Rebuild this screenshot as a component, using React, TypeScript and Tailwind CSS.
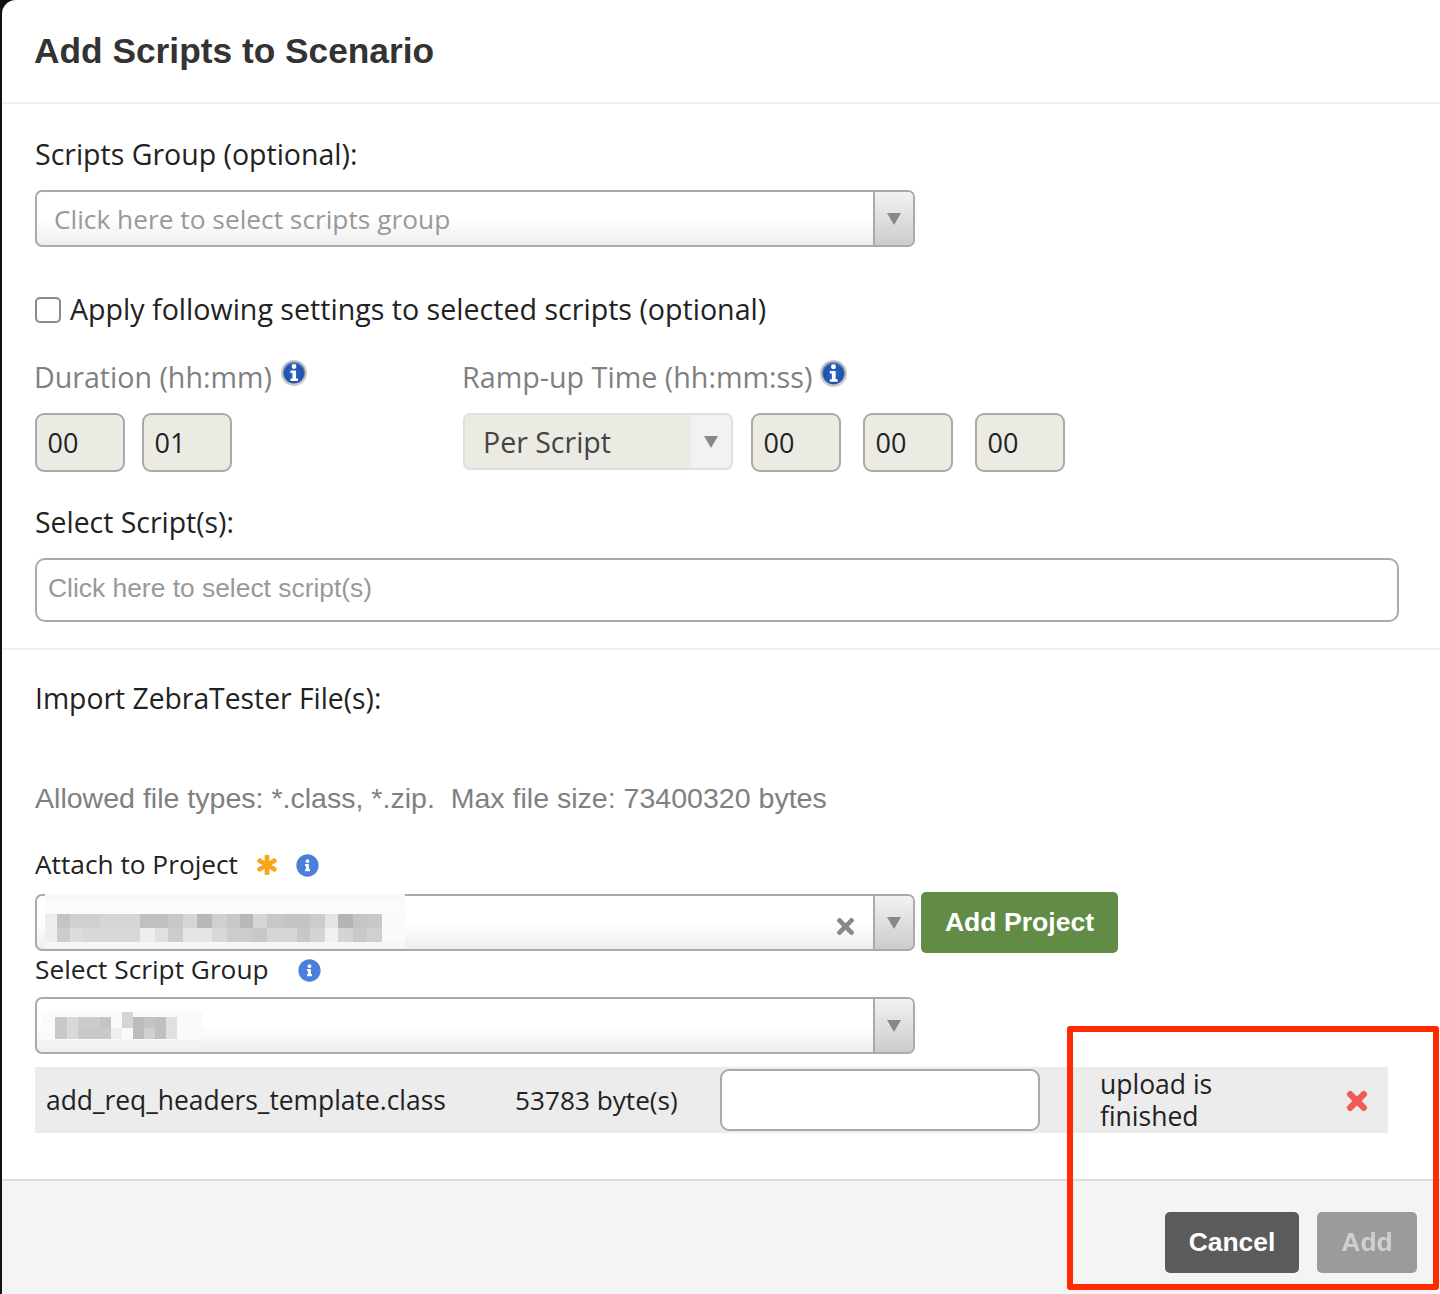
import React from "react";
import { FaAsterisk, FaInfoCircle, FaTimes } from "react-icons/fa";

type Part = [number, number, number, number, string];

const row = (y: number, h: number, stops: [number, string][]): Part[] =>
  stops.map(([x, c], i) => (i + 1 < stops.length ? ([x, y, stops[i + 1][0] - x, h, c] as Part) : ([x, y, 0, 0, c] as Part)));

const mosaicA: Part[] = [
  [0, 0, 360, 6, "#f8f8f8"],
  [0, 6, 360, 14, "#fbfbfb"],
  [0, 20, 360, 28, "#fafafa"],
  [0, 48, 360, 6, "#f7f7f7"],
  [0, 20, 12, 28, "#eeeeee"],
  ...row(20, 14, [[12, "#c4c4c4"], [25, "#d0d0d0"], [55, "#d6d6d6"], [95, "#c0c0c0"], [123, "#c8c8c8"], [138, "#d6d6d6"], [152, "#b8b8b8"], [167, "#d0d0d0"], [182, "#c8c8c8"], [195, "#b8b8b8"], [208, "#d6d6d6"], [222, "#c8c8c8"], [238, "#c4c4c4"], [265, "#cccccc"], [280, "#e4e4e4"], [293, "#b4b4b4"], [308, "#c4c4c4"], [322, "#c8c8c8"], [337, "#f0f0f0"]]),
  ...row(34, 14, [[12, "#cccccc"], [25, "#dddddd"], [38, "#d8d8d8"], [95, "#eeeeee"], [110, "#e0e0e0"], [123, "#cccccc"], [138, "#e4e4e4"], [167, "#d8d8d8"], [182, "#cccccc"], [208, "#c8c8c8"], [222, "#d6d6d6"], [252, "#c8c8c8"], [265, "#d4d4d4"], [280, "#f0f0f0"], [293, "#d4d4d4"], [308, "#c8c8c8"], [322, "#d0d0d0"], [337, "#f0f0f0"]]),
];

const mosaicB: Part[] = [
  [0, 5, 162, 33, "#fafafa"],
  [0, 33, 162, 5, "#f2f2f2"],
  [14, 10, 12, 22, "#c8c8c8"],
  [26, 10, 11, 11, "#d8d8d8"],
  [26, 21, 11, 11, "#d8d8d8"],
  [37, 10, 22, 11, "#cccccc"],
  [37, 21, 22, 11, "#c8c8c8"],
  [59, 10, 11, 11, "#c4c4c4"],
  [59, 21, 11, 11, "#c8c8c8"],
  [70, 21, 11, 11, "#eeeeee"],
  [81, 5, 11, 16, "#d4d4d4"],
  [92, 10, 11, 22, "#bcbcbc"],
  [103, 10, 11, 11, "#c4c4c4"],
  [103, 21, 11, 11, "#d0d0d0"],
  [114, 10, 11, 22, "#c0c0c0"],
  [125, 10, 11, 22, "#e0e0e0"],
];

function Mosaic({ parts, width, height, className }: { parts: Part[]; width: number; height: number; className: string }) {
  return (
    <svg width={width} height={height} viewBox={`0 0 ${width} ${height}`} className={className} shapeRendering="crispEdges">
      {parts.map(([x, y, w, h, c], i) => (
        <rect key={i} x={x} y={y} width={w} height={h} fill={c} />
      ))}
    </svg>
  );
}

function GlossyInfo({ size = 26 }: { size?: number }) {
  return (
    <svg width={size} height={size} viewBox="0 0 26 26">
      <defs>
        <radialGradient id="gi" cx="50%" cy="55%" r="55%">
          <stop offset="0%" stopColor="#2f6fd0" />
          <stop offset="75%" stopColor="#1f4fa8" />
          <stop offset="100%" stopColor="#8fa6cc" />
        </radialGradient>
      </defs>
      <circle cx="13" cy="13" r="13" fill="#c9c9c9" />
      <circle cx="13" cy="12.5" r="11" fill="url(#gi)" />
      <circle cx="13" cy="6.5" r="2.4" fill="#fff" />
      <path d="M9.5 10.5h5.5v8h2v2.5H9.5v-2.5h2v-5.5h-2z" fill="#fff" />
    </svg>
  );
}

function Arrow() {
  return <span className="h-0 w-0 border-x-[7px] border-t-[12px] border-x-transparent border-t-[#888888]" />;
}

function ComboBox({ children, clear }: { children?: React.ReactNode; clear?: boolean }) {
  return (
    <div className="relative flex h-[57px] w-[880px] overflow-hidden rounded-[7px] border-2 border-[#aaaaaa] bg-gradient-to-b from-white from-50% to-[#eeeeee]">
      <div className="relative flex flex-1 items-center">
        {children}
        {clear && <FaTimes className="absolute right-[15px] top-[18px] text-[25px] text-[#888888]" />}
      </div>
      <div className="flex w-[40px] items-center justify-center border-l-2 border-[#aaaaaa] bg-gradient-to-b from-[#f2f2f2] to-[#cccccc]">
        <Arrow />
      </div>
    </div>
  );
}

function Box({ value }: { value: string }) {
  return (
    <div className="flex h-[59px] w-[90px] items-center rounded-[9px] border-2 border-[#aaaaaa] bg-[#ebebe4] pl-[10.5px] pt-[1px] text-[27px] text-[#222222]">
      {value}
    </div>
  );
}

export default function App() {
  return (
    <div className="relative h-[1294px] w-[1440px] overflow-hidden bg-[#111111] font-['Open_Sans',sans-serif] text-[#222222] antialiased">
      <div className="ml-[2px] flex h-full flex-col rounded-tl-[14px] bg-white">
        <header className="flex h-[104px] shrink-0 items-start border-b-2 border-[#eeeeee] pl-[32px] pt-[26px]">
          <h1 className="font-['Liberation_Sans',sans-serif] text-[35.3px] font-bold leading-[50px] text-[#333333]">Add Scripts to Scenario</h1>
        </header>

        <section className="flex h-[546px] shrink-0 flex-col border-b-2 border-[#eeeeee] pl-[33px]">
          <label className="mt-[30px] text-[28.5px] leading-[40px]">Scripts Group (optional):</label>
          <div className="mt-[16px]">
            <ComboBox>
              <span className="mt-[2px] pl-[17px] text-[26.3px] text-[#999999]">Click here to select scripts group</span>
            </ComboBox>
          </div>

          <div className="mt-[43px] flex h-[40px] items-center">
            <span className="h-[26px] w-[26px] rounded-[5px] border-2 border-[#8a8a8a] bg-white" />
            <span className="-mt-[2px] ml-[9px] text-[28.6px]">Apply following settings to selected scripts (optional)</span>
          </div>

          <div className="-ml-px mt-[27px] flex h-[40px]">
            <div className="flex w-[428px] items-center text-[28.6px] text-[#808080]">
              Duration (hh:mm)
              <span className="-mt-[8px] ml-[9px]"><GlossyInfo /></span>
            </div>
            <div className="flex items-center text-[28.7px] text-[#808080]">
              Ramp-up Time (hh:mm:ss)
              <span className="-mt-[8px] ml-[8px]"><GlossyInfo size={27} /></span>
            </div>
          </div>

          <div className="mt-[16px] flex items-start">
            <div className="flex w-[428px] gap-[17px]">
              <Box value="00" />
              <Box value="01" />
            </div>
            <div className="flex h-[57px] w-[270px] overflow-hidden rounded-[7px] border-2 border-[#e0e0e0] bg-[#ebebe4]">
              <span className="mt-[2px] flex flex-1 items-center pl-[18px] text-[28.5px] text-[#444444]">Per Script</span>
              <span className="flex w-[40px] items-center justify-center bg-[#f2f2f2]">
                <Arrow />
              </span>
            </div>
            <div className="ml-[18px] flex gap-[22px]">
              <Box value="00" />
              <Box value="00" />
              <Box value="00" />
            </div>
          </div>

          <label className="mt-[30px] text-[28.4px] leading-[40px]">Select Script(s):</label>
          <div className="mt-[16px] flex h-[64px] w-[1364px] items-center rounded-[10px] border-2 border-[#aaaaaa] bg-white pb-[2px] pl-[11px] font-['Liberation_Sans',sans-serif] text-[26.4px] text-[#999999]">
            Click here to select script(s)
          </div>
        </section>

        <section className="flex flex-1 flex-col pl-[33px]">
          <label className="mt-[28px] text-[28.3px] leading-[40px]">Import ZebraTester File(s):</label>
          <p className="mt-[60px] whitespace-pre font-['Liberation_Sans',sans-serif] text-[28.55px] leading-[40px] text-[#808080]">Allowed file types: *.class, *.zip.  Max file size: 73400320 bytes</p>

          <div className="mt-[27px] flex h-[40px] items-center text-[26.25px]">
            Attach to Project
            <FaAsterisk stroke="currentColor" strokeWidth={36} className="ml-[19px] text-[20px] text-[#f9a61a]" />
            <FaInfoCircle className="ml-[19px] text-[23px] text-[#4a7fdc]" />
          </div>

          <div className="mt-[7px] flex items-start">
            <div className="relative mt-[2px]">
              <ComboBox clear />
              <Mosaic parts={mosaicA} width={360} height={54} className="absolute left-[10px] top-0" />
            </div>
            <button className="ml-[6px] h-[61px] w-[197px] rounded-[5px] bg-[#628c46] font-['Liberation_Sans',sans-serif] text-[26.6px] font-bold text-white">Add Project</button>
          </div>

          <div className="-mt-[3px] flex h-[40px] items-center text-[26.25px]">
            Select Script Group
            <FaInfoCircle className="ml-[29px] text-[23px] text-[#4a7fdc]" />
          </div>

          <div className="relative mt-[7px]">
            <ComboBox />
            <Mosaic parts={mosaicB} width={170} height={40} className="absolute left-[6px] top-[10px]" />
          </div>

          <div className="mt-[13px] flex h-[66px] w-[1353px] items-center bg-[#ececec] text-[26.4px]">
            <span className="ml-[11px] mt-[2px] w-[469px]">add_req_headers_template.class</span>
            <span className="mt-[2px] w-[205px] text-[26.2px]">53783 byte(s)</span>
            <span className="h-[62px] w-[320px] rounded-[9px] border-2 border-[#aaaaaa] bg-white" />
            <span className="ml-[60px] w-[243px] text-[26.5px] leading-[32px]">upload is<br />finished</span>
            <FaTimes stroke="currentColor" strokeWidth={20} className="mt-[2px] text-[28px] text-[#ee5b52]" />
          </div>
        </section>

        <footer className="flex h-[115px] shrink-0 items-start justify-end gap-[18px] border-t-2 border-[#dddddd] bg-[#f4f4f4] pr-[23px] pt-[31px] font-['Liberation_Sans',sans-serif] text-[26.4px] font-bold">
          <button className="h-[61px] w-[134px] rounded-[5px] bg-[#5b5b5b] text-white">Cancel</button>
          <button className="h-[61px] w-[100px] rounded-[5px] bg-[#9b9b9b] text-[#cfcfcf]">Add</button>
        </footer>
      </div>

      <div className="absolute left-[1067px] top-[1026px] h-[264px] w-[372px] rounded-[3px] border-[6px] border-[#ff2a00]" />
    </div>
  );
}
